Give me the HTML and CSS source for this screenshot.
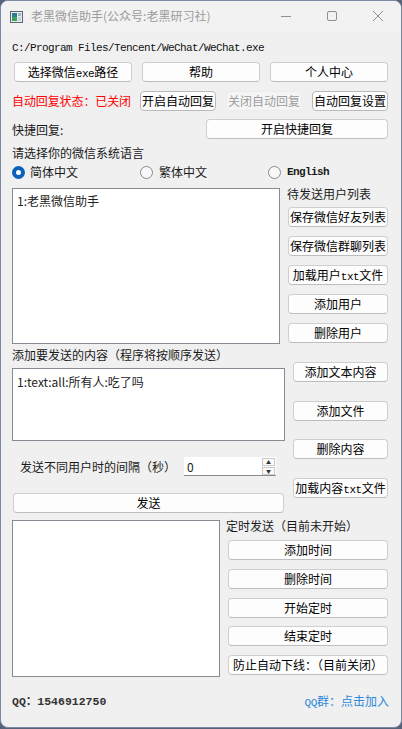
FILE: index.html
```html
<!DOCTYPE html>
<html lang="zh-CN">

<head>
    <meta charset="UTF-8">
    <meta name="viewport" content="width=device-width, initial-scale=1.0">
    <title>老黑微信助手</title>
    <link rel="stylesheet" href="styles.css">
</head>

<body>
<div class="window">
    <div class="titlebar">
        <svg class="app_icon" width="13" height="12" viewBox="0 0 13 12">
            <rect x="0.5" y="0.5" width="12" height="11" fill="#e8ecef" stroke="#5c6670"/>
            <rect x="2" y="2" width="5" height="8" fill="#2f7d8c"/>
            <rect x="2" y="6" width="5" height="4" fill="#3aa55a"/>
            <rect x="8" y="2" width="3" height="3" fill="#9fb6c4"/>
            <rect x="8" y="6" width="3" height="4" fill="#c4d2da"/>
        </svg>
        <span class="title">老黑微信助手(公众号:老黑研习社)</span>
        <div class="controls">
            <span class="ctl">
                <svg width="12" height="12" viewBox="0 0 12 12"><path d="M1 6.5h10" stroke="#8f8f8f" stroke-width="1"/></svg>
            </span>
            <span class="ctl">
                <svg width="12" height="12" viewBox="0 0 12 12"><rect x="1.5" y="1.5" width="9" height="9" rx="1.5" fill="none" stroke="#8f8f8f"/></svg>
            </span>
            <span class="ctl">
                <svg width="12" height="12" viewBox="0 0 12 12"><path d="M1 1l10 10M11 1L1 11" stroke="#8f8f8f" stroke-width="1"/></svg>
            </span>
        </div>
    </div>

    <div class="content">
        <div class="path">C:/Program Files/Tencent/WeChat/WeChat.exe</div>

        <div class="row top_buttons">
            <button class="btn">选择微信<span class="mono">exe</span>路径</button>
            <button class="btn">帮助</button>
            <button class="btn">个人中心</button>
        </div>

        <div class="row auto_row">
            <span class="status">自动回复状态：已关闭</span>
            <button class="btn small">开启自动回复</button>
            <button class="btn small" disabled>关闭自动回复</button>
            <button class="btn small">自动回复设置</button>
        </div>

        <div class="row quick_row">
            <span class="text">快捷回复:</span>
            <button class="btn quick">开启快捷回复</button>
        </div>

        <div class="label lang_label">请选择你的微信系统语言</div>
        <div class="radios">
            <label class="radio"><span class="circle checked"></span>简体中文</label>
            <label class="radio"><span class="circle"></span>繁体中文</label>
            <label class="radio"><span class="circle"></span><span class="english">English</span></label>
        </div>

        <div class="section users">
            <div class="listbox user_list">
                <div class="item">1:老黑微信助手</div>
            </div>
            <div class="side user_side">
                <div class="side_title">待发送用户列表</div>
                <button class="btn">保存微信好友列表</button>
                <button class="btn">保存微信群聊列表</button>
                <button class="btn">加载用户<span class="mono">txt</span>文件</button>
                <button class="btn">添加用户</button>
                <button class="btn">删除用户</button>
            </div>
        </div>

        <div class="section messages">
            <div class="msg_left">
                <div class="label">添加要发送的内容（程序将按顺序发送）</div>
                <div class="listbox msg_list">
                    <div class="item">1:text:all:所有人:吃了吗</div>
                </div>
                <div class="interval">
                    <span class="text">发送不同用户时的间隔（秒）</span>
                    <div class="spin">
                        <span class="spin_value">0</span>
                        <span class="arrows">
                            <span class="arrow">&#9650;</span>
                            <span class="arrow">&#9660;</span>
                        </span>
                    </div>
                </div>
                <button class="btn send">发送</button>
            </div>
            <div class="side msg_side">
                <button class="btn">添加文本内容</button>
                <button class="btn">添加文件</button>
                <button class="btn">删除内容</button>
                <button class="btn">加载内容<span class="mono">txt</span>文件</button>
            </div>
        </div>

        <div class="section timer">
            <div class="listbox timer_list"></div>
            <div class="side timer_side">
                <div class="side_title">定时发送（目前未开始）</div>
                <button class="btn">添加时间</button>
                <button class="btn">删除时间</button>
                <button class="btn">开始定时</button>
                <button class="btn">结束定时</button>
                <button class="btn">防止自动下线：（目前关闭）</button>
            </div>
        </div>

        <div class="footer">
            <span class="qq">QQ：1546912750</span>
            <a class="group" href="#"><span class="mono">QQ</span>群：点击加入</a>
        </div>
    </div>
</div>
</body>

</html>
```

FILE: styles.css
```css
* {
    margin: 0;
    padding: 0;
    box-sizing: border-box;
}

body {
    background: #55627a;
    font-family: "Noto Sans CJK SC", sans-serif;
    font-size: 12px;
    color: #1a1a1a;
}

.window {
    width: 402px;
    height: 728px;
    background: #f0f0f0;
    border: 1px solid #7b8aa3;
    border-radius: 8px;
    overflow: hidden;
}

/* 标题栏 */
.titlebar {
    height: 30px;
    display: flex;
    align-items: center;
    padding-left: 9px;
    background: #f2f2f2;
}

.app_icon {
    margin-right: 8px;
    margin-top: 1px;
}

.title {
    color: #9b9b9b;
    line-height: 16px;
}

.controls {
    display: flex;
    margin-left: auto;
    height: 100%;
}

.ctl {
    width: 46px;
    height: 100%;
    display: flex;
    align-items: center;
    justify-content: center;
}

/* 内容 */
.content {
    padding: 0 13px 0 11px;
}

.path {
    margin-top: 9px;
    height: 16px;
    line-height: 16px;
    font-family: "Liberation Mono", monospace;
    font-size: 11px;
    letter-spacing: -0.6px;
    color: #111;
}

.mono {
    font-family: "Liberation Mono", monospace;
    font-size: 11px;
    letter-spacing: -0.4px;
}

.row {
    display: flex;
    align-items: center;
    height: 20px;
}

.btn {
    flex: none;
    height: 20px;
    border: 1px solid #cfcfcf;
    border-bottom-color: #bdbdbd;
    border-radius: 4px;
    background: #fdfdfd;
    font: inherit;
    line-height: 18px;
    color: #000;
    text-align: center;
    white-space: nowrap;
    overflow: hidden;
}

.btn:disabled {
    background: #f5f5f5;
    border-color: #ececec;
    color: #9d9d9d;
}

.top_buttons {
    margin-top: 6px;
    padding-left: 2px;
    gap: 10px;
}

.top_buttons .btn {
    width: 118px;
}

.auto_row {
    margin-top: 9px;
    gap: 10px;
}

.status {
    flex: none;
    width: 118px;
    margin-right: -10px;
    white-space: nowrap;
    letter-spacing: -0.1px;
    color: #ff0000;
    line-height: 20px;
}

.auto_row .status + .btn {
    margin-left: 10px;
}

.btn.small {
    width: 76px;
    border-color: #b9b9b9;
}

.btn.small:disabled {
    border-color: #ececec;
}

.quick_row {
    margin-top: 8px;
}

.quick {
    width: 182px;
    margin-left: auto;
}

.label {
    height: 16px;
    line-height: 16px;
}

.lang_label {
    margin-top: 6px;
}

/* 单选 */
.radios {
    display: flex;
    margin-top: 3px;
    height: 16px;
}

.radio {
    flex: none;
    width: 128px;
    display: flex;
    align-items: center;
    line-height: 16px;
}

.radio:last-child {
    width: auto;
}

.circle {
    flex: none;
    width: 13px;
    height: 13px;
    border-radius: 50%;
    border: 1px solid #8a8a8a;
    background: #f8f8f8;
    margin-right: 5px;
}

.radio:nth-child(2) .circle,
.radio:nth-child(3) .circle {
    margin-right: 6px;
}

.circle.checked {
    border: 4px solid #0a63b8;
    background: #ffffff;
}

.english {
    font-family: "Liberation Mono", monospace;
    font-size: 11px;
    letter-spacing: -0.6px;
    font-weight: bold;
}

/* 列表区 */
.section {
    display: flex;
    align-items: flex-start;
}

.listbox {
    flex: none;
    background: #ffffff;
    border: 1px solid #868b94;
}

.item {
    padding: 4px 0 0 4px;
    line-height: 16px;
    color: #222;
}

.side {
    display: flex;
    flex-direction: column;
}

.side_title {
    height: 16px;
    line-height: 16px;
}

.users {
    margin-top: 8px;
}

.user_list {
    width: 268px;
    height: 156px;
}

.user_side {
    margin-left: 7px;
    margin-top: -2px;
    gap: 9px;
}

.user_side .side_title {
    margin-bottom: -4px;
}

.user_side .btn {
    width: 100px;
    margin-left: 1px;
}

.messages {
    margin-top: 3px;
}

.msg_left {
    flex: none;
    width: 273px;
    display: flex;
    flex-direction: column;
}

.msg_list {
    margin-top: 5px;
    height: 73px;
}

.msg_list .item {
    padding-top: 5px;
}

.interval {
    margin-top: 16px;
    height: 19px;
    display: flex;
    align-items: center;
}

.interval .text {
    margin-left: 8px;
    width: 164px;
}

.spin {
    width: 92px;
    height: 19px;
    background: #ffffff;
    border-bottom: 1px solid #8c8c8c;
    display: flex;
    align-items: center;
}

.spin_value {
    padding-left: 3px;
    flex: 1;
}

.arrows {
    display: flex;
    flex-direction: column;
    gap: 1px;
    margin-right: 1px;
}

.arrow {
    width: 13px;
    height: 8px;
    border: 1px solid #c9c9c9;
    background: #fafafa;
    font-size: 5px;
    line-height: 6px;
    text-align: center;
    color: #333;
}

.send {
    margin-top: 17px;
    margin-left: 1px;
    width: 271px;
}

.msg_side {
    margin-left: 8px;
    padding-top: 15px;
    gap: 18.7px;
}

.msg_side .btn {
    width: 95px;
}

.timer {
    margin-top: 7px;
}

.timer_list {
    width: 208px;
    height: 157px;
}

.timer_side {
    margin-left: 6px;
    margin-top: -2px;
    gap: 8.75px;
}

.timer_side .side_title {
    margin-bottom: -2.75px;
}

.timer_side .btn {
    width: 160px;
    margin-left: 2px;
}

.footer {
    margin-top: 15px;
    height: 16px;
    display: flex;
    align-items: center;
    justify-content: space-between;
}

.qq {
    font-family: "Liberation Mono", "Noto Sans CJK SC", monospace;
    font-size: 11.5px;
    font-weight: bold;
    color: #333;
}

.group {
    color: #2a88dc;
    text-decoration: none;
    margin-right: -1px;
}
```
